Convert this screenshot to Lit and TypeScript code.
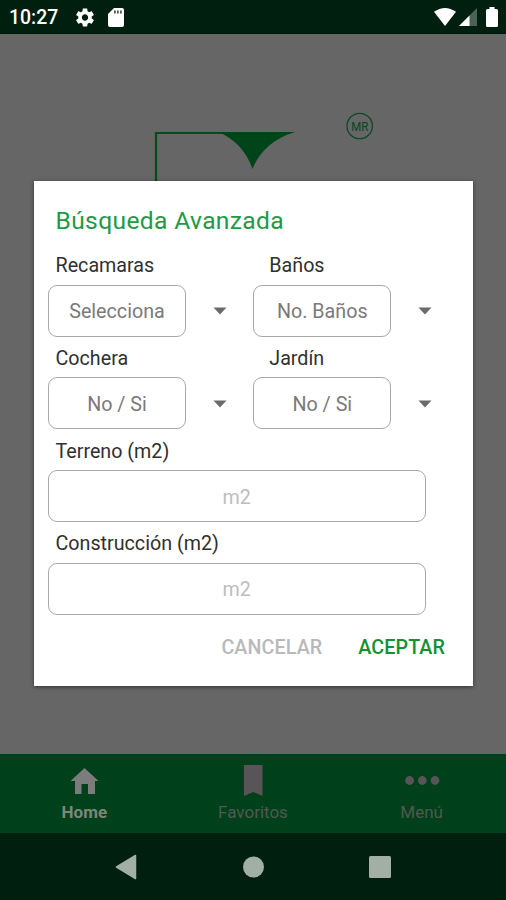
import { LitElement, html, css, svg } from "lit";
import { customElement, property } from "lit/decorators.js";

@customElement("spinner-field")
class SpinnerField extends LitElement {
  @property() label = "";
  @property() value = "";

  static styles = css`
    :host { display: block; }
    .label {
      height: 31px;
      line-height: 33px;
      padding-left: 7.5px;
      color: #303030;
      white-space: nowrap;
    }
    .label.indent { padding-left: 16px; }
    .row { display: flex; align-items: center; height: 52px; margin-top: 4.500px; }
    .box {
      box-sizing: border-box;
      width: 138px;
      height: 52px;
      border: 1.5px solid #a9a9a9;
      border-radius: 9px;
      display: flex;
      align-items: center;
      justify-content: center;
      color: #7a7a7a;
      padding-top: 2px;
    }
    .arrow { width: 14px; height: 8px; margin-left: 26.5px; margin-top: 1px; fill: #6b6b6b; }
  `;
  render() {
    return html`
      <div class="label ${this.hasAttribute("indent") ? "indent" : ""}">${this.label}</div>
      <div class="row">
        <div class="box">${this.value}</div>
        <svg class="arrow" viewBox="0 0 14 8"><path d="M.5.5h13L7 7.5z" /></svg>
      </div>
    `;
  }
}

@customElement("area-field")
class AreaField extends LitElement {
  @property() label = "";

  static styles = css`
    :host { display: block; }
    .label { height: 31px; line-height: 33px; padding-left: 7.5px; color: #303030; }
    .box {
      box-sizing: border-box;
      width: 377.5px;
      height: 52px;
      margin-top: 4.500px;
      border: 1.5px solid #a9a9a9;
      border-radius: 9px;
      display: flex;
      align-items: center;
      justify-content: center;
      color: #bdbdbd;
      padding-top: 2px;
    }
  `;
  render() {
    return html`<div class="label">${this.label}</div><div class="box">m2</div>`;
  }
}

const homeIcon = svg`<path d="M14.500 0 28.500 13H25V26H18V16H11.500V26H5V13H.500z" />`;
const bookmarkIcon = svg`<path d="M5 -3H23.500V28L14.250 24 5 28z" />`;
const dotsIcon = svg`<circle cx="1.600" cy="12.500" r="4.400" /><circle cx="14.300" cy="12.500" r="4.400" /><circle cx="27" cy="12.500" r="4.400" />`;

@customElement("app-root")
class AppRoot extends LitElement {
  static styles = css`
    :host {
      display: flex;
      flex-direction: column;
      position: relative;
      width: 506px;
      height: 900px;
      overflow: hidden;
      font-family: Roboto, "Liberation Sans", sans-serif;
      font-size: 19.7px;
      background: #666;
    }
    .status {
      box-sizing: border-box;
      height: 34px;
      background: #001f0f;
      display: flex;
      align-items: center;
      padding: 1px 8px 0 9px;
      color: #fff;
      fill: #fff;
      border-bottom: 1px solid #00120a;
    }
    .clock { font-size: 19.4px; font-weight: 500; width: 67px; }
    .gear { width: 18px; height: 19px; margin-right: 14px; }
    .card { width: 16px; height: 19px; }
    .spacer { flex: 1; }
    .wifi { width: 22px; height: 18px; margin-right: 3px; }
    .signal { width: 18px; height: 18px; margin-right: 9px; }
    .battery { width: 12px; height: 20px; }
    .content { height: 720px; }
    .brand { display: block; width: 506px; height: 160px; }
    .mr { font-size: 12px; fill: #07431f; }
    .tabs { display: flex; height: 79px; background: #00401b; }
    .tab {
      flex: 1;
      display: flex;
      flex-direction: column;
      align-items: center;
      padding-top: 14px;
      color: #4f5a50;
      fill: #575557;
      font-size: 17px;
    }
    .tab.on { color: #7b867d; fill: #7d7c7d; font-weight: 700; }
    .tab svg { width: 28px; height: 26px; overflow: visible; }
    .tab span { margin-top: 8px; line-height: 20px; }
    .nav {
      flex: 1;
      display: flex;
      justify-content: center;
      align-items: center;
      gap: 104px;
      background: #001f0f;
      fill: #a1afa6;
    }
    .nav svg { width: 23px; height: 26px; display: block; }
    .dialog {
      position: absolute;
      left: 34px;
      top: 181px;
      width: 439px;
      height: 504.5px;
      box-sizing: border-box;
      background: #fff;
      padding: 24px 14px 0;
      box-shadow: 0 1px 4px rgba(0, 0, 0, 0.5);
    }
    .title {
      color: #1f9a44;
      font-size: 24.6px;
      line-height: 32px;
      padding-left: 7.5px;
      letter-spacing: 0.36px;
    }
    .form { display: flex; flex-direction: column; gap: 5.3px; margin-top: 12px; }
    .pair { display: grid; grid-template-columns: 205.300px 205.300px; }
    .actions {
      display: flex;
      justify-content: flex-end;
      gap: 36px;
      padding-right: 14px;
      margin-top: 21px;
      font-size: 19.7px;
      font-weight: 500;
      letter-spacing: 0.1px;
      line-height: 24px;
    }
    .cancel { color: #b9b9b9; }
    .accept { color: #14912f; }
  `;

  private tab(label: string, icon: unknown, on = false) {
    return html`<div class="tab ${on ? "on" : ""}">
      <svg viewBox="0 0 28 26">${icon}</svg><span>${label}</span>
    </div>`;
  }

  render() {
    return html`
      <div class="status">
        <span class="clock">10:27</span>
        <svg class="gear" viewBox="2 2 20 20"><path d="M19.43 12.98c.04-.32.07-.64.07-.98s-.03-.66-.07-.98l2.110-1.650c.19-.15.24-.42.12-.64l-2-3.460c-.12-.22-.39-.3-.61-.22l-2.490 1c-.52-.4-1.080-.73-1.690-.98l-.38-2.650C14.460 2.180 14.250 2 14 2h-4c-.25 0-.46.18-.49.42l-.38 2.650c-.61.25-1.170.59-1.690.98l-2.490-1c-.23-.09-.49 0-.61.22l-2 3.460c-.13.22-.07.49.12.64l2.110 1.650c-.04.32-.07.65-.07.98s.03.66.07.98l-2.110 1.650c-.19.15-.24.42-.12.64l2 3.460c.12.22.39.3.61.22l2.490-1c.52.4 1.080.73 1.690.98l.38 2.650c.03.24.24.42.49.42h4c.25 0 .46-.18.49-.42l.38-2.650c.61-.25 1.170-.59 1.690-.98l2.490 1c.23.09.49 0 .61-.22l2-3.460c.12-.22.07-.49-.12-.64zM12 15.500c-1.930 0-3.500-1.570-3.500-3.500s1.570-3.500 3.500-3.500 3.500 1.570 3.500 3.500-1.570 3.500-3.500 3.500z" /></svg>
        <svg class="card" viewBox="0 0 16 19">
          <path d="M6 0h8q2 0 2 2v15q0 2-2 2H2q-2 0-2-2V6z" />
          <path d="M6 2.500h1.800v3H6zM9 2.500h1.800v3H9zM12 2.500h1.800v3H12z" fill="#4d5c53" />
        </svg>
        <span class="spacer"></span>
        <svg class="wifi" viewBox="0 0 22 18"><path d="M0 3.800Q11-3.800 22 3.800L11 18z" /></svg>
        <svg class="signal" viewBox="0 0 18 18">
          <path d="M18 0V18H0z" fill="#4b6256" /><path d="M10.500 7.500V18H0z" />
        </svg>
        <svg class="battery" viewBox="0 0 12 20"><path d="M3.500 0h5v2H10.500Q12 2 12 3.500V18.500Q12 20 10.500 20H1.500Q0 20 0 18.500V3.500Q0 2 1.500 2H3.500z" /></svg>
      </div>

      <div class="content">
        <svg class="brand" viewBox="0 34 506 160">
          <path d="M156 194V133H290" fill="none" stroke="#004d1c" stroke-width="2.200" />
          <path d="M218 132H295Q263 142 252.500 169Q243 142 218 132z" fill="#00451a" />
          <circle cx="359.700" cy="126" r="12.700" fill="none" stroke="#0b4a29" stroke-width="1.300" />
          <text class="mr" x="359.700" y="130.500" text-anchor="middle" textLength="17" lengthAdjust="spacingAndGlyphs">MR</text>
        </svg>
      </div>

      <div class="tabs">
        ${this.tab("Home", homeIcon, true)}
        ${this.tab("Favoritos", bookmarkIcon)}
        ${this.tab("Menú", dotsIcon)}
      </div>

      <div class="nav">
        <svg viewBox="0 0 23 26"><path d="M20.500 1.500 1.500 13 20.500 24.500z" stroke="#a1afa6" stroke-width="1.500" stroke-linejoin="round" /></svg>
        <svg viewBox="0 0 23 26"><circle cx="11.500" cy="13" r="10.500" /></svg>
        <svg viewBox="0 0 23 26"><rect x="0" y="2" width="22" height="22" rx="1.500" /></svg>
      </div>

      <div class="dialog">
        <div class="title">Búsqueda Avanzada</div>
        <div class="form">
          <div class="pair">
            <spinner-field label="Recamaras" value="Selecciona"></spinner-field>
            <spinner-field indent label="Baños" value="No. Baños"></spinner-field>
          </div>
          <div class="pair">
            <spinner-field label="Cochera" value="No / Si"></spinner-field>
            <spinner-field indent label="Jardín" value="No / Si"></spinner-field>
          </div>
          <area-field label="Terreno (m2)"></area-field>
          <area-field label="Construcción (m2)"></area-field>
        </div>
        <div class="actions">
          <span class="cancel">CANCELAR</span>
          <span class="accept">ACEPTAR</span>
        </div>
      </div>
    `;
  }
}
